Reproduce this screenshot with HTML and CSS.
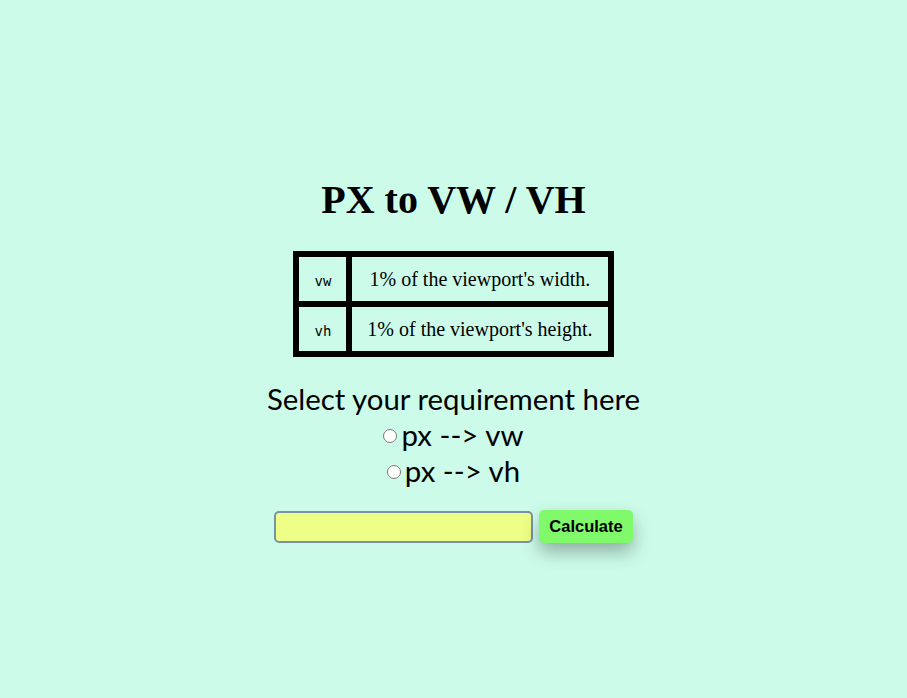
FILE: index.html
```html
<!DOCTYPE html>
<html>
<head>
<meta charset="utf-8">
<title>PX to VW / VH</title>
<link rel="stylesheet" href="styles.css">
</head>
<body>
<main class="page">
  <h1 class="title">PX to VW / VH</h1>
  <table class="units">
    <tr>
      <td class="unit"><code>vw</code></td>
      <td class="desc">1% of the viewport's width.</td>
    </tr>
    <tr>
      <td class="unit"><code>vh</code></td>
      <td class="desc">1% of the viewport's height.</td>
    </tr>
  </table>
  <div class="choices">
    <div class="prompt">Select your requirement here</div>
    <label class="choice"><input type="radio" name="mode" value="vw">px --&gt; vw</label>
    <label class="choice"><input type="radio" name="mode" value="vh">px --&gt; vh</label>
  </div>
  <div class="calc">
    <input class="value" type="text">
    <button class="btn" type="button">Calculate</button>
  </div>
</main>
</body>
</html>
```

FILE: styles.css
```css
html, body {
  margin: 0;
  padding: 0;
}
body {
  background: #ccfce9;
  min-height: 100vh;
}
.page {
  display: flex;
  flex-direction: column;
  align-items: center;
  padding-top: 178px;
}
.title {
  font-family: "Liberation Serif", serif;
  font-size: 40px;
  font-weight: bold;
  line-height: 44px;
  margin: 0 0 29px;
  color: #000;
}
.units {
  border: 3px solid #000;
  border-spacing: 0;
  font-family: "Liberation Serif", serif;
  font-size: 20px;
}
.units td {
  border: 3px solid #000;
  padding: 0 15px;
  height: 44px;
  text-align: center;
}
.units code {
  font-family: "DejaVu Sans Mono", monospace;
  font-size: 14px;
}
.choices {
  display: flex;
  flex-direction: column;
  align-items: center;
  margin-top: 24px;
  font-family: Lato, sans-serif;
  font-size: 29.4px;
  color: #000;
}
.prompt {
  line-height: 36px;
}
.choice {
  display: flex;
  align-items: center;
  line-height: 36px;
}
.choice input {
  margin: 2px 4px 0 0;
  width: 14px;
  height: 14px;
}
.calc {
  display: flex;
  align-items: center;
  gap: 6px;
  margin-top: 21px;
}
.value {
  width: 259px;
  height: 32px;
  box-sizing: border-box;
  border: 2px solid #7893a8;
  border-radius: 5px;
  background: #eeff88;
  padding: 0 6px;
}
.btn {
  height: 33px;
  padding: 0 10px;
  border: none;
  border-radius: 5px;
  background: #80f96a;
  font-family: "Liberation Sans", Arial, sans-serif;
  font-weight: bold;
  font-size: 16.5px;
  color: #000;
  box-shadow: 0 9px 18px rgba(0, 0, 0, 0.3);
}
```
